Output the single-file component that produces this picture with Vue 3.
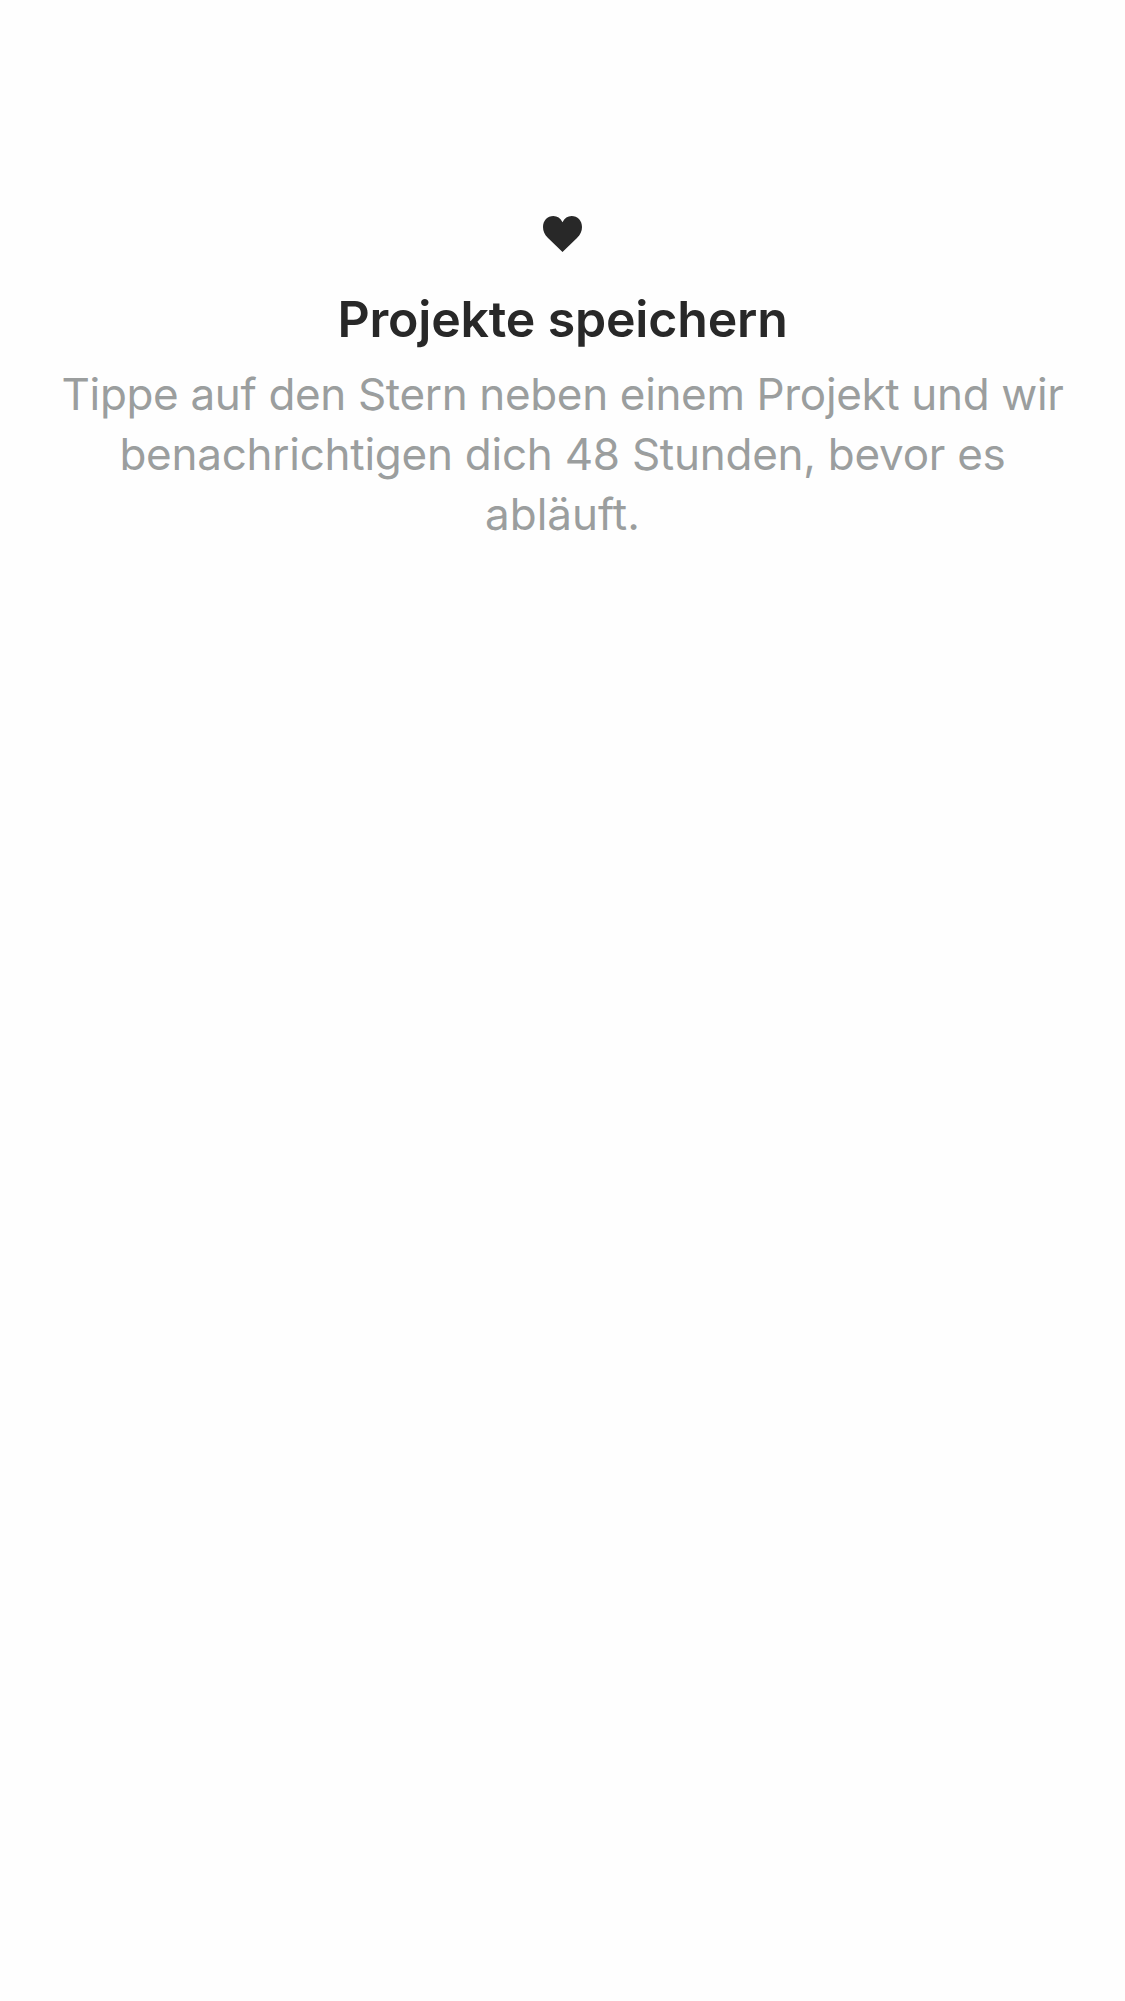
<script setup>
const title = 'Projekte speichern'
const lines = [
  'Tippe auf den Stern neben einem Projekt und wir',
  'benachrichtigen dich 48 Stunden, bevor es',
  'abläuft.',
]
</script>

<template>
  <main class="screen">
    <svg class="heart" viewBox="0 0 39 36" aria-hidden="true">
      <path d="M19.5 36 L5 22 C1.6 18.7 0 15 0 11 C0 4.6 4.5 0 10.4 0 C14.3 0 17.5 2.2 19.5 6.3 C21.5 2.2 24.7 0 28.6 0 C34.5 0 39 4.6 39 11 C39 15 37.4 18.7 34 22 Z" />
    </svg>
    <h1 class="title">{{ title }}</h1>
    <p class="message">
      <span v-for="line in lines" :key="line" class="line">{{ line }}</span>
    </p>
  </main>
</template>

<style scoped>
.screen {
  box-sizing: border-box;
  display: flex;
  flex-direction: column;
  align-items: center;
  min-height: 2001px;
  padding-top: 216px;
  background: #fefefe;
  font-family: Inter, sans-serif;
  text-align: center;
}
.heart {
  width: 39px;
  height: 36px;
  fill: #282828;
}
.title {
  margin: 37px 0 0;
  font-size: 50px;
  line-height: 61px;
  font-weight: 600;
  letter-spacing: -0.18px;
  color: #282828;
}
.message {
  margin: 14px 0 0;
  font-size: 44px;
  line-height: 60px;
  color: #9b9e9e;
}
.line {
  display: block;
  white-space: nowrap;
}
.line:nth-child(1) {
  letter-spacing: -0.35px;
}
.line:nth-child(2) {
  letter-spacing: -0.26px;
}
</style>
